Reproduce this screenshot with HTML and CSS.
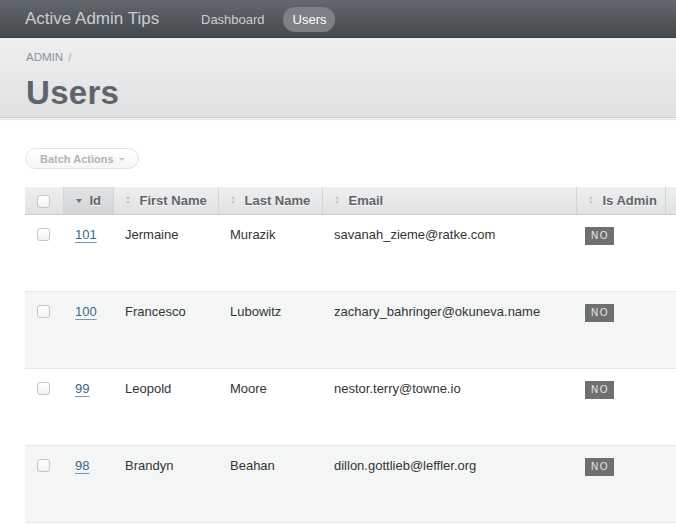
FILE: index.html
```html
<!DOCTYPE html>
<html>
<head>
<meta charset="utf-8">
<link rel="stylesheet" href="styles.css">
</head>
<body>
<header class="topbar">
  <h1 class="site-title">Active Admin Tips</h1>
  <nav class="tabs">
    <a class="tab">Dashboard</a>
    <a class="tab current">Users</a>
  </nav>
</header>
<div class="title-bar">
  <div class="breadcrumb">ADMIN <span class="sep">/</span></div>
  <h2 class="page-title">Users</h2>
</div>
<main class="content">
  <div class="batch-row">
    <span class="batch-btn">Batch Actions <span class="caret"></span></span>
  </div>
  <table class="index-table">
    <thead>
      <tr>
        <th class="col-sel"><span class="cb"></span></th>
        <th class="col-id sorted"><span class="arrow down"></span>Id</th>
        <th class="col-first"><span class="arrow both"></span>First Name</th>
        <th class="col-last"><span class="arrow both"></span>Last Name</th>
        <th class="col-email"><span class="arrow both"></span>Email</th>
        <th class="col-admin"><span class="arrow both"></span>Is Admin</th>
        <th class="col-more"></th>
      </tr>
    </thead>
    <tbody>
      <tr class="odd">
        <td><span class="cb"></span></td>
        <td><a class="link">101</a></td>
        <td>Jermaine</td>
        <td>Murazik</td>
        <td>savanah_zieme@ratke.com</td>
        <td><span class="tag">NO</span></td>
        <td></td>
      </tr>
      <tr class="even">
        <td><span class="cb"></span></td>
        <td><a class="link">100</a></td>
        <td>Francesco</td>
        <td>Lubowitz</td>
        <td>zachary_bahringer@okuneva.name</td>
        <td><span class="tag">NO</span></td>
        <td></td>
      </tr>
      <tr class="odd">
        <td><span class="cb"></span></td>
        <td><a class="link">99</a></td>
        <td>Leopold</td>
        <td>Moore</td>
        <td>nestor.terry@towne.io</td>
        <td><span class="tag">NO</span></td>
        <td></td>
      </tr>
      <tr class="even">
        <td><span class="cb"></span></td>
        <td><a class="link">98</a></td>
        <td>Brandyn</td>
        <td>Beahan</td>
        <td>dillon.gottlieb@leffler.org</td>
        <td><span class="tag">NO</span></td>
        <td></td>
      </tr>
    </tbody>
  </table>
</main>
</body>
</html>
```

FILE: styles.css
```css
* { box-sizing: border-box; }
html, body { margin: 0; padding: 0; }
body {
  font-family: "Liberation Sans", Arial, sans-serif;
  color: #323537;
  background: #fff;
  width: 676px;
  overflow: hidden;
}

.topbar {
  height: 38px;
  background: linear-gradient(#62686d, #44494d);
  border-bottom: 1px solid #3a3e41;
  display: flex;
  align-items: center;
  padding: 1px 0 0 25px;
}
.site-title {
  margin: 0 0 1px 0;
  font-size: 17px;
  font-weight: normal;
  color: #cdcdcd;
  width: 156px;
  white-space: nowrap;
}
.tabs { display: flex; align-items: center; gap: 8px; margin-left: 10px; }
.tab {
  font-size: 13px;
  color: #cdcdcd;
  padding: 5px 10px 5px 10px;
  border-radius: 12px;
  line-height: 15px;
}
.tab.current {
  background: #7c8186;
  color: #fff;
  padding: 5px 8px 5px 10px;
}

.title-bar {
  height: 80px;
  background: linear-gradient(#efefef, #dfe1e2);
  border-bottom: 1px solid #cdcdcd;
  box-shadow: 0 1px 0 #f6f6f6, 0 2px 1px #e4e4e4;
  padding: 12px 26px 0;
}
.breadcrumb {
  font-size: 11.5px;
  color: #8a949b;
  line-height: 14px;
}
.breadcrumb .sep { color: #aab; margin-left: 2px; }
.page-title {
  margin: 10px 0 0 0;
  font-size: 33px;
  font-weight: bold;
  color: #5e6469;
  line-height: 38px;
  letter-spacing: 0.3px;
}

.content { padding: 30px 0 0 25px; }
.batch-row { height: 39px; }
.batch-btn {
  display: inline-flex;
  align-items: center;
  height: 21px;
  padding: 0 13px 0 14px;
  border: 1px solid #e2e2e2;
  border-radius: 11px;
  background: linear-gradient(#ffffff, #f6f6f6);
  color: #b3b3b3;
  font-size: 11px;
  font-weight: bold;
}
.caret {
  display: inline-block;
  width: 0; height: 0;
  border-left: 3px solid transparent;
  border-right: 3px solid transparent;
  border-top: 3px solid #c5c5c5;
  margin-left: 5px;
  margin-top: 1px;
}

.index-table {
  border-collapse: collapse;
  table-layout: fixed;
  width: 651px;
  font-size: 13px;
}
.index-table th {
  height: 27px;
  padding: 0 12px;
  text-align: left;
  font-size: 13px;
  font-weight: bold;
  color: #5e6469;
  text-shadow: 0 1px 0 #fff;
  background: linear-gradient(#efefef, #dfe1e2);
  border-right: 1px solid #d3d3d3;
  border-left: 1px solid #f4f4f4;
  border-bottom: 1px solid #cdcdcd;
  white-space: nowrap;
  vertical-align: middle;
}
.index-table th:first-child { border-left: none; }
.index-table th:last-child { border-right: none; padding: 0; }
.index-table th.sorted { background: linear-gradient(#e2e3e4, #d2d4d5); }
.col-sel { width: 38px; }
.col-id { width: 50px; }
.col-first { width: 105px; }
.col-last { width: 104px; }
.col-email { width: 254px; }
.col-admin { width: 89px; }
.col-more { width: 11px; }

.arrow {
  display: inline-block;
  width: 5px;
  margin-right: 9px;
  vertical-align: middle;
  position: relative;
  height: 9px;
  top: -1px;
}
.arrow.down::after {
  content: "";
  position: absolute;
  left: 0; top: 3px;
  border-left: 3px solid transparent;
  border-right: 3px solid transparent;
  border-top: 4px solid #6d7378;
}
.arrow.both::before, .arrow.both::after {
  content: "";
  position: absolute;
  left: 0;
  border-left: 2.5px solid transparent;
  border-right: 2.5px solid transparent;
}
.arrow.both::before { top: 0; border-bottom: 3px solid #c2c4c6; }
.arrow.both::after { top: 5px; border-top: 3px solid #c2c4c6; }

.index-table td {
  height: 77px;
  padding: 12px 12px 0;
  vertical-align: top;
  border-bottom: 1px solid #e8e8e8;
  color: #323537;
  white-space: nowrap;
  line-height: 16px;
}
.index-table td:last-child { padding: 0; }
.index-table tr.even td { background: #f4f5f5; }

.cb {
  display: inline-block;
  width: 13px;
  height: 13px;
  border: 1px solid #c6c6c6;
  border-radius: 3px;
  background: linear-gradient(#ffffff, #f2f2f2);
  vertical-align: middle;
  position: relative;
  top: -1px;
}
th .cb { top: 0; }

.link { color: #38678b; text-decoration: underline; text-underline-offset: 3px; text-decoration-color: #7c9ab2; }

.tag {
  display: inline-block;
  background: #6f6f6f;
  color: #e6e6e6;
  font-size: 10px;
  letter-spacing: 1.5px;
  padding: 3px 5px 3px 6px;
  line-height: 12px;
  margin-left: -3px;
}
```
